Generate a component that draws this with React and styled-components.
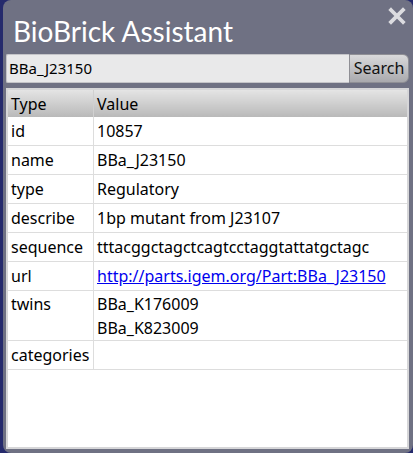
import React from "react";
import styled, { createGlobalStyle } from "styled-components";

const GlobalStyle = createGlobalStyle`
  html, body {
    margin: 0;
    padding: 0;
    background: #252a6c;
    overflow: hidden;
  }
`;

const rows = [
  { type: "id", value: ["10857"] },
  { type: "name", value: ["BBa_J23150"] },
  { type: "type", value: ["Regulatory"] },
  { type: "describe", value: ["1bp mutant from J23107"] },
  { type: "sequence", value: ["tttacggctagctcagtcctaggtattatgctagc"] },
  { type: "url", value: ["http://parts.igem.org/Part:BBa_J23150"], link: true },
  { type: "twins", value: ["BBa_K176009", "BBa_K823009"] },
  { type: "categories", value: [] },
];

const Window = styled.div`
  margin-left: 3px;
  width: 410px;
  height: 453px;
  box-sizing: border-box;
  background: #6f7183;
  border-radius: 8px;
  display: flex;
  flex-direction: column;
  padding: 0 4px 4px 3px;
  font-family: "Noto Sans", "Open Sans", sans-serif;
`;

const TitleBar = styled.div`
  display: flex;
  align-items: flex-start;
  justify-content: space-between;
  height: 54px;
`;

const Title = styled.h1`
  margin: 13px 0 0 7px;
  font-family: Lato, "Noto Sans", sans-serif;
  font-size: 28px;
  font-weight: 400;
  color: #ffffff;
  line-height: 36px;
`;

const Close = styled.svg`
  margin: 7px 3px 0 0;
  width: 18px;
  height: 18px;
`;

const SearchRow = styled.div`
  display: flex;
  height: 29px;
`;

const Input = styled.div`
  flex: 1;
  background: #e9e9ea;
  border: 1px solid #c4c4c8;
  border-right: none;
  border-radius: 2px 0 0 2px;
  font-size: 15px;
  line-height: 27px;
  padding-left: 2px;
  color: #000;
`;

const Button = styled.div`
  width: 58px;
  background: linear-gradient(#d9d9db, #a9a9ad);
  border: 1px solid #8f8f95;
  border-radius: 0 6px 6px 0;
  font-size: 16px;
  line-height: 27px;
  text-align: center;
  color: #111;
`;

const TableWrap = styled.div`
  margin-top: 5px;
  flex: 1;
  background: #ffffff;
  border: 2px solid #d6d6d8;
`;

const Table = styled.table`
  width: 100%;
  border-collapse: collapse;
  font-size: 16px;
  color: #000;
`;

const Head = styled.th`
  text-align: left;
  font-weight: 400;
  height: 27px;
  padding: 0 0 0 3px;
  background: linear-gradient(#e4e4e4, #b9b9b9);
  border-right: 1px solid #d0d0d0;
  width: ${(p) => p.w || "auto"};
  &:last-child { border-right: none; }
`;

const Cell = styled.td`
  padding: ${(p) => (p.multi ? "1px 0 0 3px" : "0 0 0 3px")};
  height: 28px;
  line-height: ${(p) => (p.multi ? "24px" : "28px")};
  vertical-align: top;
  border-bottom: 1px solid #dddddd;
  border-right: 1px solid #dddddd;
  &:last-child { border-right: none; }
`;

const Line = styled.div`
  white-space: nowrap;
`;

const Link = styled.a`
  color: #0000ee;
  text-decoration: underline;
`;

export default function App() {
  return (
    <>
      <GlobalStyle />
      <Window>
        <TitleBar>
          <Title>BioBrick Assistant</Title>
          <Close viewBox="0 0 18 18">
            <path d="M3 3 L15 15 M15 3 L3 15" stroke="#dcdce0" strokeWidth="3.8" strokeLinecap="square" />
          </Close>
        </TitleBar>
        <SearchRow>
          <Input>BBa_J23150</Input>
          <Button>Search</Button>
        </SearchRow>
        <TableWrap>
          <Table>
            <thead>
              <tr>
                <Head w="82px">Type</Head>
                <Head>Value</Head>
              </tr>
            </thead>
            <tbody>
              {rows.map((r) => {
                const multi = r.value.length > 1;
                return (
                  <tr key={r.type}>
                    <Cell multi={multi}>{r.type}</Cell>
                    <Cell multi={multi}>
                      {r.value.map((v) => (
                        <Line key={v}>{r.link ? <Link href="#">{v}</Link> : v}</Line>
                      ))}
                    </Cell>
                  </tr>
                );
              })}
            </tbody>
          </Table>
        </TableWrap>
      </Window>
    </>
  );
}
